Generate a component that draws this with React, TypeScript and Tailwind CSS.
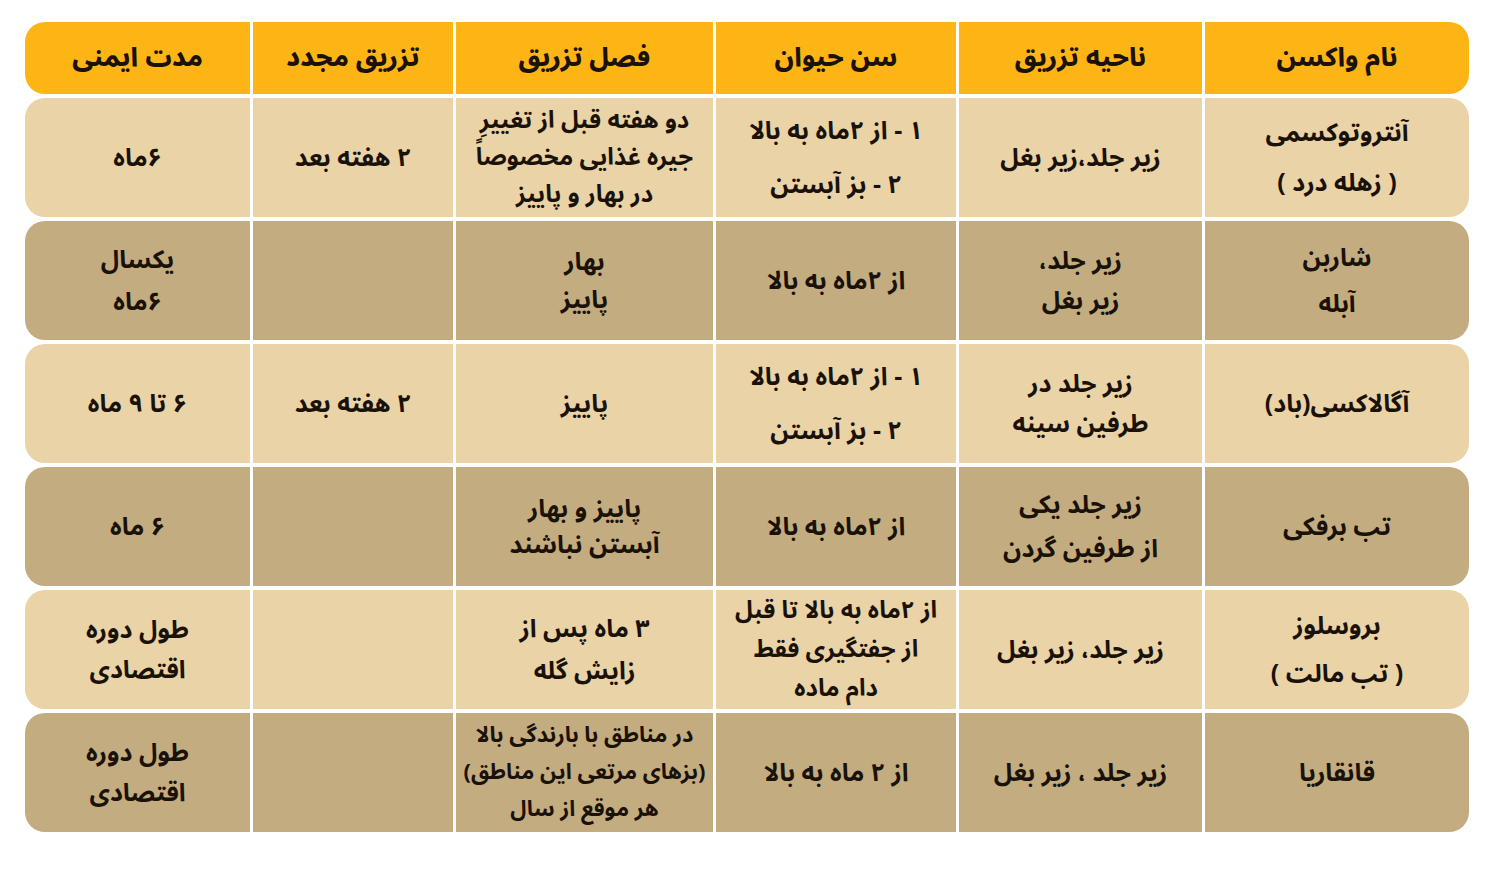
import React from "react";

type Cell = { lines: string[]; lh?: string; sz?: string };

const cols = ["w-[264px]", "w-[243px]", "w-[240px]", "w-[257px]", "w-[200px]", "w-[225px]"];

const header = ["نام واکسن", "ناحیه تزریق", "سن حیوان", "فصل تزریق", "تزریق مجدد", "مدت ایمنی"];

const rows: { bg: string; cells: Cell[] }[] = [
  {
    bg: "bg-[#e9d3a7]",
    cells: [
      { lines: ["آنتروتوکسمی", "( زهله درد )"], lh: "leading-[50px]" },
      { lines: ["زیر جلد،زیر بغل"] },
      { lines: ["۱ - از ۲ماه به بالا", "۲ - بز آبستن"], lh: "leading-[54px]" },
      { lines: ["دو هفته قبل از تغییرِ", "جیره غذایی مخصوصاً", "در بهار و پاییز"], lh: "leading-[37px]", sz: "text-[24px]" },
      { lines: ["۲ هفته بعد"] },
      { lines: ["۶ماه"] },
    ],
  },
  {
    bg: "bg-[#c3ac7f]",
    cells: [
      { lines: ["شاربن", "آبله"], lh: "leading-[46px]" },
      { lines: ["زیر جلد،", "زیر بغل"], lh: "leading-[40px]" },
      { lines: ["از ۲ماه به بالا"] },
      { lines: ["بهار", "پاییز"], lh: "leading-[38px]" },
      { lines: [] },
      { lines: ["یکسال", "۶ماه"], lh: "leading-[42px]" },
    ],
  },
  {
    bg: "bg-[#e9d3a7]",
    cells: [
      { lines: ["آگالاکسی(باد)"] },
      { lines: ["زیر جلد در", "طرفین سینه"], lh: "leading-[40px]" },
      { lines: ["۱ - از ۲ماه به بالا", "۲ - بز آبستن"], lh: "leading-[54px]" },
      { lines: ["پاییز"] },
      { lines: ["۲ هفته بعد"] },
      { lines: ["۶ تا ۹ ماه"] },
    ],
  },
  {
    bg: "bg-[#c3ac7f]",
    cells: [
      { lines: ["تب برفکی"] },
      { lines: ["زیر جلد یکی", "از طرفین گردن"], lh: "leading-[44px]" },
      { lines: ["از ۲ماه به بالا"] },
      { lines: ["پاییز و بهار", "آبستن نباشند"], lh: "leading-[36px]" },
      { lines: [] },
      { lines: ["۶ ماه"] },
    ],
  },
  {
    bg: "bg-[#e9d3a7]",
    cells: [
      { lines: ["بروسلوز", "( تب مالت )"], lh: "leading-[48px]" },
      { lines: ["زیر جلد، زیر بغل"] },
      { lines: ["از ۲ماه به بالا تا قبل", "از جفتگیری فقط", "دام ماده"], lh: "leading-[39px]", sz: "text-[24px]" },
      { lines: ["۳ ماه پس از", "زایش گله"], lh: "leading-[42px]" },
      { lines: [] },
      { lines: ["طول دوره", "اقتصادی"], lh: "leading-[40px]" },
    ],
  },
  {
    bg: "bg-[#c3ac7f]",
    cells: [
      { lines: ["قانقاریا"] },
      { lines: ["زیر جلد ، زیر بغل"] },
      { lines: ["از ۲ ماه به بالا"] },
      { lines: ["در مناطق با بارندگی بالا", "(بزهای مرتعی این مناطق)", "هر موقع از سال"], lh: "leading-[37px]", sz: "text-[22px]" },
      { lines: [] },
      { lines: ["طول دوره", "اقتصادی"], lh: "leading-[40px]" },
    ],
  },
];

export default function App() {
  return (
    <div className="w-[1500px] h-[875px] bg-white pt-[22px] pl-[25px] pr-[31px] font-['Noto_Sans_Arabic',sans-serif]">
      <div dir="rtl" className="flex flex-col gap-[4px] text-[#1a1209] font-bold">
        <div className="flex gap-[3px] h-[72px] rounded-[20px] overflow-hidden">
          {header.map((h, i) => (
            <div
              key={i}
              className={`${cols[i]} shrink-0 bg-[#fdb515] flex items-center justify-center text-[26px] leading-[40px] font-extrabold`}
            >
              {h}
            </div>
          ))}
        </div>
        {rows.map((r, ri) => (
          <div key={ri} className="flex gap-[3px] h-[119px] rounded-[20px] overflow-hidden">
            {r.cells.map((c, ci) => (
              <div
                key={ci}
                className={`${cols[ci]} shrink-0 ${r.bg} flex flex-col items-center justify-center text-center ${c.sz ?? "text-[25px]"} ${c.lh ?? "leading-[40px]"}`}
              >
                {c.lines.map((l, li) => (
                  <div key={li} className="whitespace-nowrap">
                    {l}
                  </div>
                ))}
              </div>
            ))}
          </div>
        ))}
      </div>
    </div>
  );
}
